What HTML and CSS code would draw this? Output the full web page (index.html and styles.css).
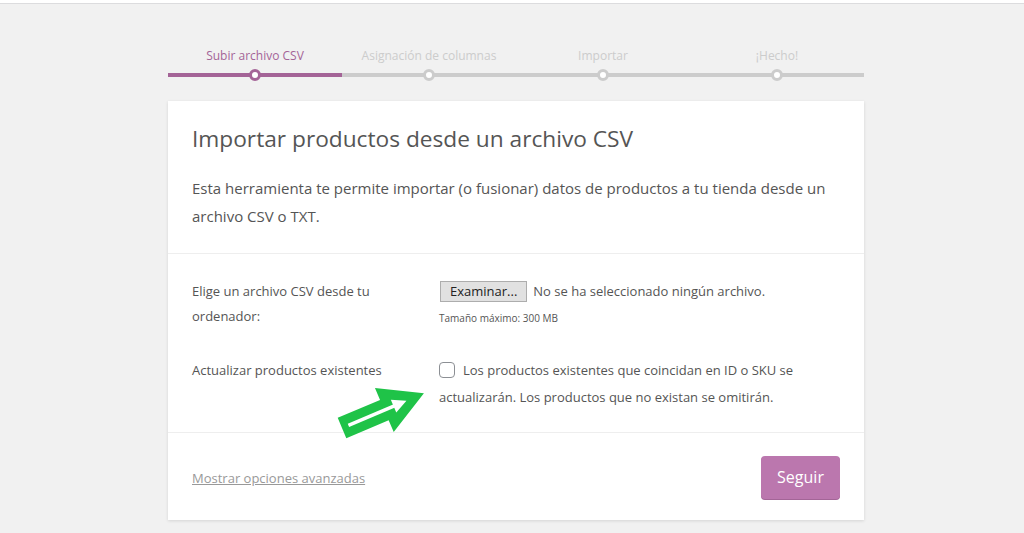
FILE: index.html
```html
<!DOCTYPE html>
<html lang="es">
<head>
<meta charset="utf-8">
<title>Importar productos</title>
<link rel="stylesheet" href="styles.css">
</head>
<body>
<div class="topbar"></div>
<div class="wrap">
  <ol class="steps">
    <li class="step active">Subir archivo CSV</li>
    <li class="step">Asignación de columnas</li>
    <li class="step">Importar</li>
    <li class="step">¡Hecho!</li>
  </ol>
  <div class="card">
    <header class="card-head">
      <h2 class="title">Importar productos desde un archivo CSV</h2>
      <p class="intro">Esta herramienta te permite importar (o fusionar) datos de productos a tu tienda desde un archivo CSV o TXT.</p>
    </header>
    <section class="card-body">
      <div class="row">
        <div class="label">Elige un archivo CSV desde tu ordenador:</div>
        <div class="field">
          <div class="file-line"><span class="file-btn">Examinar...</span><span class="file-name">No se ha seleccionado ningún archivo.</span></div>
          <div class="hint">Tamaño máximo: 300 MB</div>
        </div>
      </div>
      <div class="row row2">
        <div class="label">Actualizar productos existentes</div>
        <div class="field check-text"><span class="checkbox"></span>Los productos existentes que coincidan en ID o SKU se actualizarán. Los productos que no existan se omitirán.</div>
      </div>
      <svg class="arrow" viewBox="320 370 150 80" width="150" height="80" aria-hidden="true">
        <g transform="translate(342,427) rotate(-23)">
          <polygon points="0,-11 46,-11 46,-24 89,0 46,24 46,11 0,11" fill="#1fc348"/>
          <polyline points="7,0 62,0" stroke="#fff" stroke-width="3.5" fill="none"/>
          <polygon points="56,-7 70,0 56,7" fill="#fff"/>
        </g>
      </svg>
    </section>
    <footer class="card-foot">
      <a class="adv" href="#">Mostrar opciones avanzadas</a>
      <span class="btn">Seguir</span>
    </footer>
  </div>
</div>
</body>
</html>
```
FILE: styles.css
```css
html, body {
  margin: 0;
  padding: 0;
}
body {
  background: #f1f1f1;
  font-family: "Open Sans", "Noto Sans", sans-serif;
  color: #555;
  height: 533px;
  overflow: hidden;
}
.topbar {
  height: 3px;
  background: #fff;
  border-bottom: 1px solid #dcdcde;
}
.wrap {
  width: 696px;
  margin-left: 168px;
}
.steps {
  list-style: none;
  margin: 43px 0 0;
  padding: 0;
  display: flex;
}
.step {
  flex: 1;
  position: relative;
  text-align: center;
  font-size: 12px;
  line-height: 18px;
  color: #ccc;
  padding-bottom: 8px;
  border-bottom: 4px solid #ccc;
}
.step::before {
  content: "";
  position: absolute;
  left: calc(50% - 6px);
  bottom: -8px;
  width: 6px;
  height: 6px;
  border: 3px solid #ccc;
  border-radius: 50%;
  background: #fff;
}
.step.active {
  color: #a46497;
  border-bottom-color: #a46497;
}
.step.active::before {
  border-color: #a46497;
}
.card {
  margin-top: 24px;
  background: #fff;
  box-shadow: 0 1px 3px rgba(0,0,0,.12);
}
.card-head {
  padding: 22px 24px 23px;
  border-bottom: 1px solid #eee;
}
.title {
  margin: 0;
  font-size: 22.7px;
  font-weight: 400;
  line-height: 31px;
  color: #555;
}
.intro {
  margin: 20px 0 0;
  font-size: 15px;
  line-height: 28px;
  color: #555;
}
.card-body {
  position: relative;
  padding: 25px 24px 21px;
  border-bottom: 1px solid #eee;
}
.row {
  display: flex;
  font-size: 13px;
  line-height: 25px;
  color: #555;
}
.row2 {
  margin-top: 29px;
}
.label {
  width: 223px;
  padding-right: 24px;
  flex-shrink: 0;
}
.field {
  flex: 1;
}
.file-line {
  display: flex;
  align-items: center;
  height: 25px;
}
.file-btn {
  display: inline-block;
  box-sizing: border-box;
  height: 21px;
  line-height: 19px;
  padding: 0 9px;
  background: #e1e1e1;
  border: 1px solid #adadad;
  color: #222;
  font-size: 13px;
  margin-right: 6px;
  margin-left: 1px;
}
.file-name {
  font-size: 13px;
  color: #555;
}
.hint {
  margin-top: 7px;
  font-size: 10px;
  line-height: 14px;
  color: #555;
}
.check-text {
  line-height: 27px;
  margin-top: -1px;
}
.checkbox {
  display: inline-block;
  box-sizing: border-box;
  width: 16px;
  height: 16px;
  border: 1px solid #8c8f94;
  border-radius: 4px;
  background: #fff;
  vertical-align: -3px;
  margin-right: 8px;
}
.arrow {
  position: absolute;
  left: 152px;
  top: 117px;
}
.card-foot {
  display: flex;
  align-items: center;
  justify-content: space-between;
  padding: 23px 24px 21px;
}
.adv {
  color: #999;
  font-size: 13px;
  text-decoration: underline;
}
.btn {
  display: inline-block;
  box-sizing: border-box;
  width: 79px;
  height: 43px;
  line-height: 43px;
  text-align: center;
  background: #bb77ae;
  color: #fff;
  font-size: 16px;
  border-radius: 4px;
  box-shadow: 0 1px 0 #a36597;
}
```
